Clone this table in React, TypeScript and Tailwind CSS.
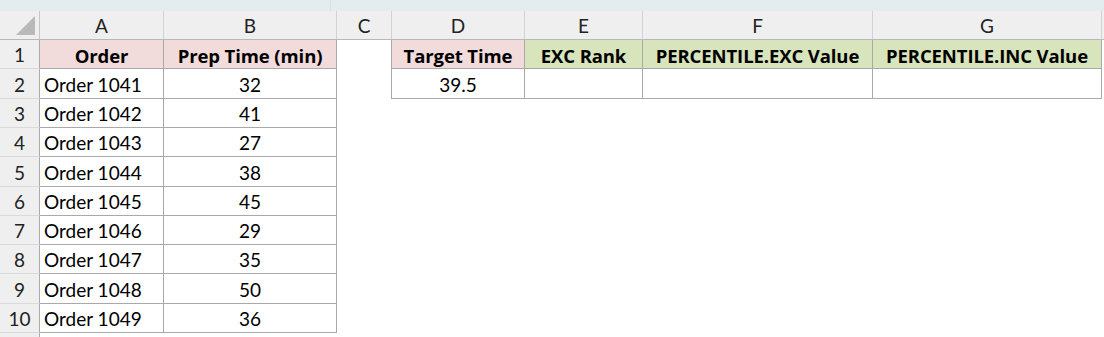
const cols = [
  { key: 'A', w: 'w-[124px]' },
  { key: 'B', w: 'w-[173px]' },
  { key: 'C', w: 'w-[55px]' },
  { key: 'D', w: 'w-[133px]' },
  { key: 'E', w: 'w-[118px]' },
  { key: 'F', w: 'w-[230px]' },
  { key: 'G', w: 'w-[229px]' },
];

const heights = ['h-[29px]', 'h-[30px]', 'h-[29px]', 'h-[29px]', 'h-[30px]', 'h-[29px]', 'h-[29px]', 'h-[29px]', 'h-[30px]', 'h-[29px]'];

const orders: [string, number][] = [
  ['Order 1041', 32],
  ['Order 1042', 41],
  ['Order 1043', 27],
  ['Order 1044', 38],
  ['Order 1045', 45],
  ['Order 1046', 29],
  ['Order 1047', 35],
  ['Order 1048', 50],
  ['Order 1049', 36],
];

const grid = 'border-r border-b border-[#a9a9a9]';
const head = 'justify-center font-bold text-[18.5px] font-["Open_Sans",sans-serif] tracking-[-0.1px]';

function Cell({ w, className = '', children }: { w: string; className?: string; children?: React.ReactNode }) {
  return <div className={`${w} shrink-0 h-full flex items-center pt-[3px] ${className}`}>{children}</div>;
}

function RowHead({ n }: { n: number }) {
  return (
    <div className="w-[40px] shrink-0 h-full flex items-center justify-center pt-[3px] bg-[#efefef] border-r border-b border-r-[#ababab] border-b-[#dadada] text-[#222]">
      {n}
    </div>
  );
}

export default function App() {
  return (
    <div className="w-[1104px] h-[337px] overflow-hidden bg-white text-[19px] text-black" style={{ fontFamily: 'Lato, "Open Sans", sans-serif' }}>
      {/* ribbon edge */}
      <div className="h-[11px] bg-[#e5ecef] flex">
        <div className="w-[331px] border-r border-[#d9e0e4]" />
      </div>

      {/* column headers */}
      <div className="h-[29px] flex bg-[#efefef] border-b border-[#b8b8b8] text-[#222]">
        <div className="w-[40px] shrink-0 border-r border-[#c6c6c6] flex items-end justify-end p-[4px]">
          <svg width="19" height="19" viewBox="0 0 19 19">
            <polygon points="19,0 19,19 0,19" fill="#b9b9b9" />
          </svg>
        </div>
        {cols.map((c) => (
          <div key={c.key} className={`${c.w} shrink-0 border-r border-[#d3d3d3] flex items-center justify-center pt-[3px]`}>
            {c.key}
          </div>
        ))}
        <div className="flex-1" />
      </div>

      {/* row 1 */}
      <div className={`${heights[0]} flex`}>
        <RowHead n={1} />
        <Cell w="w-[124px]" className={`${grid} ${head} bg-[#f2dcdb]`}>Order</Cell>
        <Cell w="w-[173px]" className={`${grid} ${head} bg-[#f2dcdb]`}>Prep Time (min)</Cell>
        <Cell w="w-[55px]" className="border-r border-[#a9a9a9]" />
        <Cell w="w-[133px]" className={`${grid} ${head} bg-[#f2dcdb]`}>Target Time</Cell>
        <Cell w="w-[118px]" className={`${grid} ${head} bg-[#d8e4bc]`}>EXC Rank</Cell>
        <Cell w="w-[230px]" className={`${grid} ${head} bg-[#d8e4bc]`}>PERCENTILE.EXC Value</Cell>
        <Cell w="w-[229px]" className={`${grid} ${head} bg-[#d8e4bc]`}>PERCENTILE.INC Value</Cell>
      </div>

      {orders.map(([name, t], i) => (
        <div key={name} className={`${heights[i + 1]} flex`}>
          <RowHead n={i + 2} />
          <Cell w="w-[124px]" className={`${grid} pl-[4px]`}>{name}</Cell>
          <Cell w="w-[173px]" className={`${grid} justify-center`}>{t}</Cell>
          {i === 0 ? (
            <>
              <Cell w="w-[55px]" className="border-r border-[#a9a9a9]" />
              <Cell w="w-[133px]" className={`${grid} justify-center`}>39.5</Cell>
              <Cell w="w-[118px]" className={grid} />
              <Cell w="w-[230px]" className={grid} />
              <Cell w="w-[229px]" className={grid} />
            </>
          ) : null}
        </div>
      ))}

      {/* row 11 peek */}
      <div className="h-[10px] flex">
        <div className="w-[40px] shrink-0 h-full bg-[#efefef] border-r border-[#ababab]" />
      </div>
    </div>
  );
}
